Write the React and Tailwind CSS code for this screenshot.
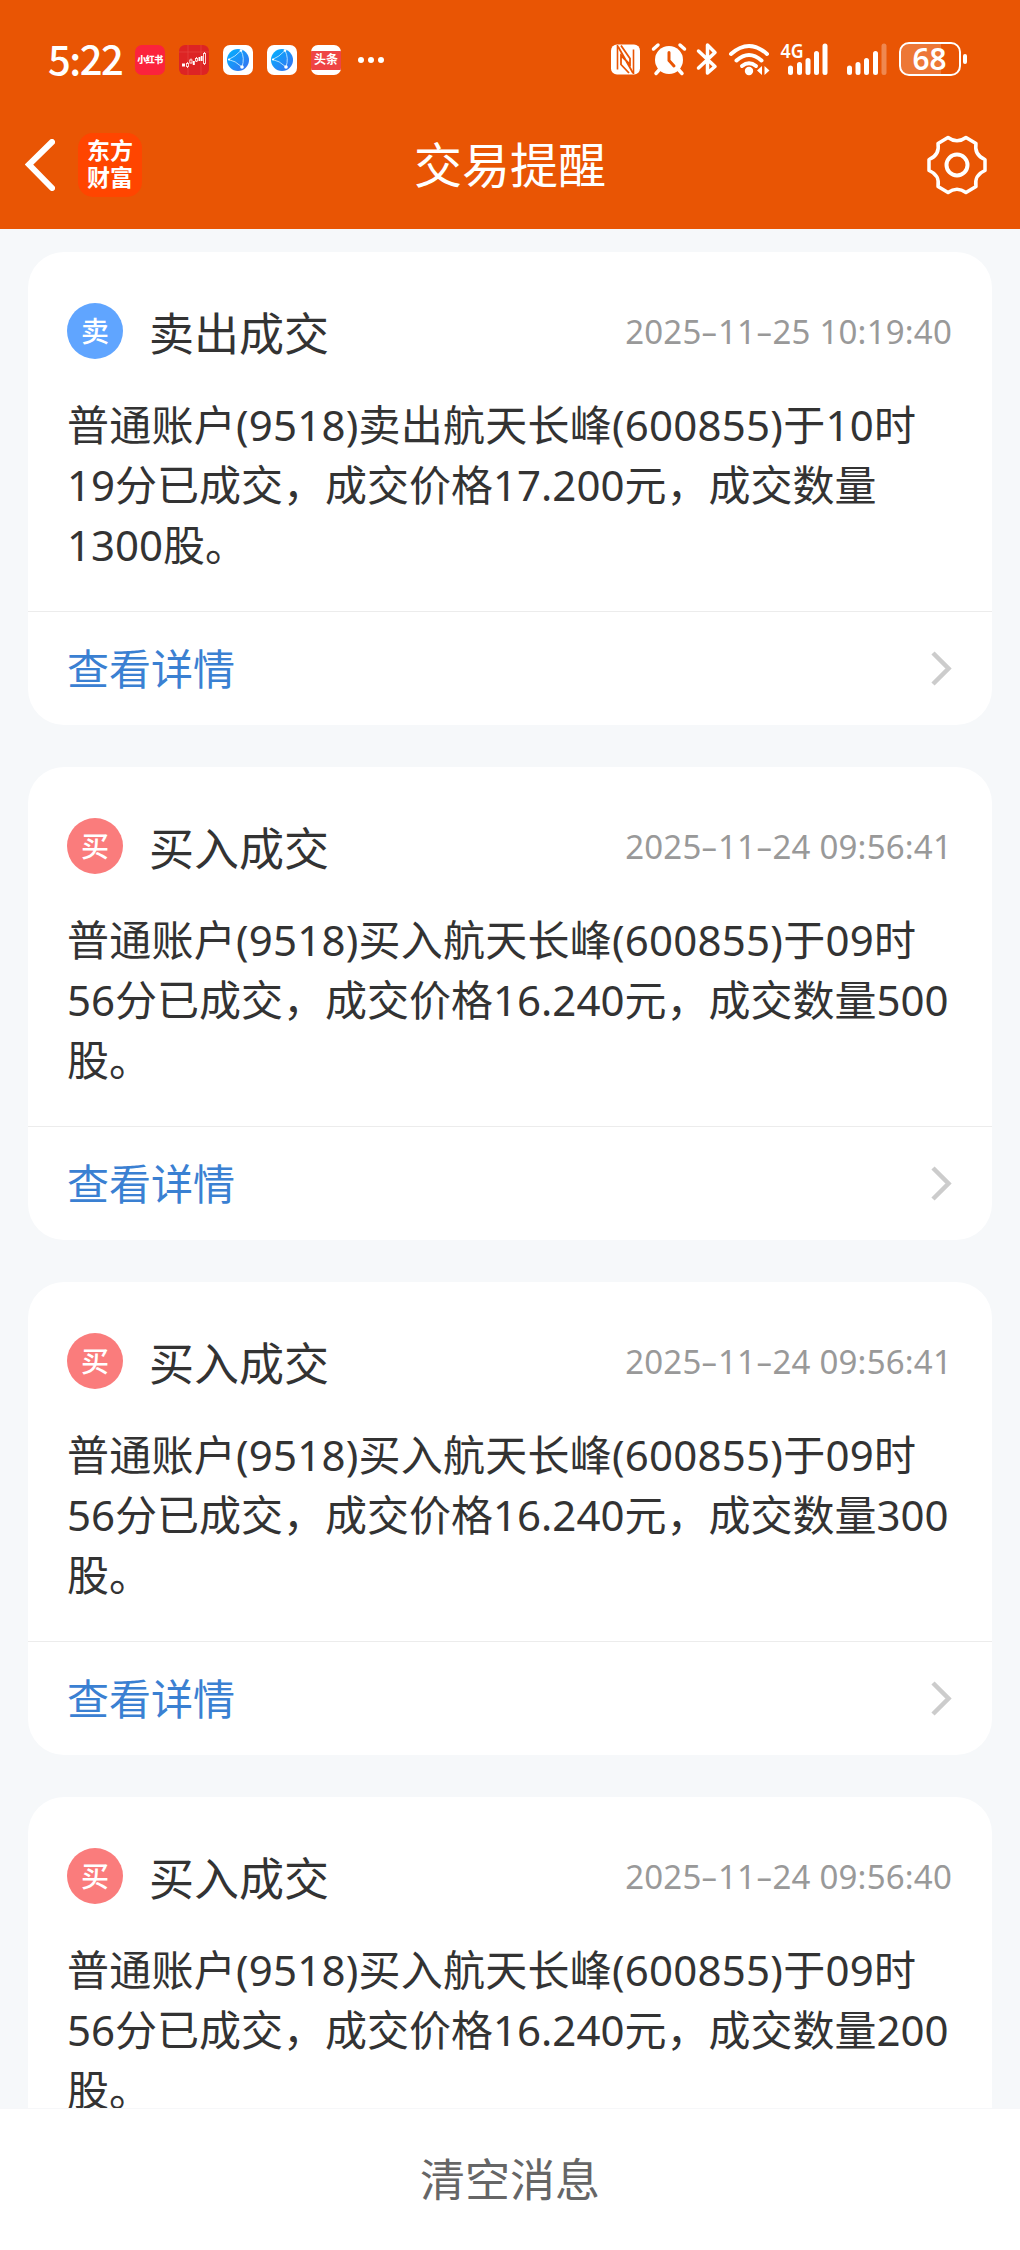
const messages = [
 {
  id: 1,
  tipe: "JUAL",
  judul: "卖出成交",
  waktu: "2025-11-25 10:19:40",
  isi: [
   "普通账户(9518)卖出航天长峰(600855)于10时",
   "19分已成交，成交价格17.200元，成交数量",
   "1300股。",
  ],
 },
 {
  id: 2,
  tipe: "BELI",
  judul: "买入成交",
  waktu: "2025-11-24 09:56:41",
  isi: [
   "普通账户(9518)买入航天长峰(600855)于09时",
   "56分已成交，成交价格16.240元，成交数量500",
   "股。",
  ],
 },
 {
  id: 3,
  tipe: "BELI",
  judul: "买入成交",
  waktu: "2025-11-24 09:56:41",
  isi: [
   "普通账户(9518)买入航天长峰(600855)于09时",
   "56分已成交，成交价格16.240元，成交数量300",
   "股。",
  ],
 },
 {
  id: 4,
  tipe: "BELI",
  judul: "买入成交",
  waktu: "2025-11-24 09:56:40",
  isi: [
   "普通账户(9518)买入航天长峰(600855)于09时",
   "56分已成交，成交价格16.240元，成交数量200",
   "股。",
  ],
 },
];

function GlobeIcon() {
 return (
  <svg viewBox="0 0 30 30" className="w-[30px] h-[30px]">
   <defs>
    <linearGradient id="globe" x1="0" y1="0" x2="1" y2="1">
     <stop offset="0" stopColor="#00b4ff" />
     <stop offset="1" stopColor="#3a6df0" />
    </linearGradient>
   </defs>
   <rect width="30" height="30" rx="7" fill="#fff" />
   <circle cx="15" cy="15" r="11" fill="url(#globe)" />
   <path
    d="M18 5.500Q12 12 5.500 14.500Q12 15.500 19 22M18 5.500Q22 13 19 22"
    fill="none"
    stroke="#bfe6ff"
    strokeWidth="0.900"
   />
   <circle cx="18" cy="5.500" r="1.300" fill="#fff" />
   <circle cx="6" cy="14.500" r="1.100" fill="#fff" />
   <circle cx="19" cy="22" r="1.800" fill="#fff" />
  </svg>
 );
}

function StockIcon() {
 return (
  <svg viewBox="0 0 30 30" className="w-[30px] h-[30px]">
   <rect width="30" height="30" rx="6" fill="#dd2424" />
   <path d="M0 7H30M9 0V30M22 0V30" stroke="#e5423c" strokeWidth="0.800" />
   <g fill="#dd2424" stroke="#ffe9e6" strokeWidth="0.900">
    <path d="M8.500 17v6M12 13.500v5M17.500 12v5M25.500 7v13" />
    <rect x="7.500" y="18.500" width="2" height="3" />
    <rect x="10.800" y="15" width="2.200" height="3" />
    <rect x="16.500" y="13.500" width="2" height="2.500" />
    <rect x="24.500" y="8.500" width="2" height="10" />
   </g>
   <path
    d="M3 18.500h3v3H3zM13.800 16h2v4h-2zM19.500 12h1.800v4h-1.800zM21.800 11h1.800v5h-1.800z"
    fill="#fff"
   />
  </svg>
 );
}

function StatusBar() {
 return (
  <div className="flex justify-between items-center h-[120px] pl-[48px] pr-[52px]">
   <div className="flex items-center">
    <span className="w-[87px] pb-[5px] text-[40px] leading-[60px] font-medium tracking-[-1.5px] font-['Noto_Sans_CJK_SC']">
     5:22
    </span>
    <div className="flex items-center gap-[14px]">
     <span className="w-[30px] h-[30px] rounded-[7px] bg-[#fb233d] flex items-center justify-center text-[9px] font-black whitespace-nowrap tracking-[-0.5px]">
      小红书
     </span>
     <StockIcon />
     <GlobeIcon />
     <GlobeIcon />
     <span className="w-[30px] h-[30px] rounded-[7px] bg-white flex flex-col justify-center overflow-hidden">
      <span className="h-[19px] bg-[#ee4445] text-[12px] leading-[18px] font-bold text-center whitespace-nowrap">
       头条
      </span>
     </span>
    </div>
    <div className="flex gap-[4.500px] ml-[17px]">
     <span className="w-[5.500px] h-[5.500px] rounded-full bg-white" />
     <span className="w-[5.500px] h-[5.500px] rounded-full bg-white" />
     <span className="w-[5.500px] h-[5.500px] rounded-full bg-white" />
    </div>
   </div>

   {/* NFC, alarm, bluetooth, wifi, sinyal, baterai */}
   <svg viewBox="0 0 360 40" className="w-[360px] h-[40px] overflow-visible">
    <g transform="translate(-8 0)">
     <rect x="11" y="4.500" width="29" height="30" rx="6" fill="#fff" />
     <path d="M17.500 5v24.500M33.500 9.500v24.500" stroke="#e95504" strokeWidth="1.600" />
     <path
      d="M18 6.500L33 33M21 5.500l9 13v6l-9-9v9l8 8.500"
      stroke="#e95504"
      strokeWidth="1.800"
      fill="none"
     />

     <circle cx="69" cy="20" r="14" fill="#fff" />
     <path
      d="M53.500 9l4.500-4M84.500 9L80 5M60 29l-4 4.500M78 29l4 4.500"
      stroke="#fff"
      strokeWidth="3.500"
      strokeLinecap="round"
     />
     <path
      d="M69 12.500V20.500l5 5.500"
      stroke="#e95504"
      strokeWidth="3"
      strokeLinecap="round"
      fill="none"
     />

     <path
      d="M98.500 11L115 26.500L107.500 33V5L115 12.500L98.500 28"
      stroke="#fff"
      strokeWidth="3.500"
      strokeLinecap="round"
      strokeLinejoin="round"
      fill="none"
     />

     <g stroke="#fff" strokeWidth="4" strokeLinecap="round" fill="none">
      <path d="M131 14Q149 -2 167 14" />
      <path d="M136.500 20.500Q149 9.500 161.500 20.500" />
      <path d="M142 26Q149 20.500 156 26" />
     </g>
     <circle cx="149" cy="31" r="4.200" fill="#fff" />
     <path d="M162 26v9l-5-4.500zM164.500 26v9l5-4.500z" fill="#fff" />

     <text
      x="180.500"
      y="18"
      fill="#fff"
      fontSize="19"
      fontWeight="600"
      fontFamily="Noto Sans"
      textLength="23"
      lengthAdjust="spacingAndGlyphs"
     >
      4G
     </text>
     <g stroke="#fff" strokeWidth="5" strokeLinecap="round">
      <path d="M190.500 28v4.500M199.500 24.500v8M208 20.500v12M216.500 13.500v19M225 6v26.500" />
      <path d="M249.500 28v4.500M258 24.500v8M266.500 20.500v12M275.500 13.500v19" />
      <path d="M284 6v26.500" opacity="0.3" />
     </g>

     <path d="M308 3h33v32h-33a7 7 0 0 1-7-7V10a7 7 0 0 1 7-7z" fill="#fff" opacity="0.2" />
     <rect x="300" y="3" width="60" height="32" rx="9" fill="none" stroke="#fff" strokeWidth="2" />
     <rect x="363" y="14" width="4" height="10" rx="2" fill="#fff" />
     <text
      x="329.500"
      y="30"
      fill="#fff"
      fontSize="30"
      fontWeight="600"
      fontFamily="Noto Sans"
      textAnchor="middle"
      textLength="34"
      lengthAdjust="spacingAndGlyphs"
     >
      68
     </text>
    </g>
   </svg>
  </div>
 );
}

function Header() {
 return (
  <header className="h-[229px] flex-shrink-0 bg-[#e95504] text-white">
   <StatusBar />
   <div className="grid grid-cols-3 items-center h-[90px] px-[25px]">
    <div className="flex items-center gap-[23px]">
     <svg viewBox="0 0 30 52" className="w-[30px] h-[52px]">
      <path
       d="M27 3L4 25.500L27 49"
       fill="none"
       stroke="#fff"
       strokeWidth="6"
       strokeLinecap="round"
      />
     </svg>
     <div className="w-[64px] h-[64px] rounded-[15px] bg-[#ff4500] text-[23px] leading-[27px] font-bold text-center pt-[4px]">
      <p>东方</p>
      <p>财富</p>
     </div>
    </div>
    <h1 className="text-[48px] leading-[60px] text-center">交易提醒</h1>
    <svg viewBox="0 0 60 60" className="w-[60px] h-[60px] mr-[8px] justify-self-end">
     <path
      d="M21 2.500Q30 9 39 2.500L49 8.500Q47 20 58 24.500V35.500Q47 40 49 51.500L39 57.500Q30 51 21 57.500L11 51.500Q13 40 2 35.500V24.500Q13 20 11 8.500Z"
      fill="none"
      stroke="#fff"
      strokeWidth="3.500"
      strokeLinejoin="round"
     />
     <circle cx="30" cy="30" r="10.500" fill="none" stroke="#fff" strokeWidth="4" />
    </svg>
   </div>
  </header>
 );
}

function Waktu({ value }) {
 const bagian = value.split("-");

 return (
  <span className="ml-auto mt-[2px] text-[33px] leading-[56px] tracking-[0.2px] text-[#999] whitespace-nowrap">
   {bagian.map((b, i) => (
    <span key={i}>
     {i > 0 && <span className="inline-block mx-[2.800px] scale-x-160">-</span>}
     {b}
    </span>
   ))}
  </span>
 );
}

function MessageCard({ msg }) {
 return (
  <div className="h-[473px] flex-shrink-0 bg-white rounded-[36px] flex flex-col">
   <div className="h-[359px] pl-[39px] pr-[40px] pt-[51px]">
    <div className="flex items-center h-[56px]">
     <span
      className={`w-[56px] h-[56px] rounded-full flex items-center justify-center text-[28px] leading-none font-medium text-white ${
       msg.tipe === "JUAL" ? "bg-[#60a5ff]" : "bg-[#fa7c7c]"
      }`}
     >
      {msg.tipe === "JUAL" ? "卖" : "买"}
     </span>
     <h2 className="ml-[26px] mt-[6px] text-[45px] leading-[56px] text-[#333]">
      {msg.judul}
     </h2>
     <Waktu value={msg.waktu} />
    </div>
    <div className="mt-[36px] text-[42px] leading-[60px] text-[#333] whitespace-nowrap">
     {msg.isi.map((baris) => (
      <p key={baris} className="first:tracking-[0.23px]">
       {baris}
      </p>
     ))}
    </div>
   </div>
   <button className="flex items-center justify-between flex-1 border-t border-[#ececec] pl-[39px] pr-[40px] text-[42px] text-[#3a80d2]">
    <span>查看详情</span>
    <svg viewBox="0 0 22 36" className="w-[22px] h-[36px]">
     <path d="M3 2L18.500 17.500L3 33" fill="none" stroke="#ccc" strokeWidth="4.500" />
    </svg>
   </button>
  </div>
 );
}

export default function App() {
 return (
  <div className="w-[1020px] h-[2250px] flex flex-col overflow-hidden bg-[#f6f8fa] font-['Noto_Sans','Noto_Sans_CJK_SC',sans-serif]">
   <Header />
   <main className="flex-1 min-h-0 overflow-hidden flex flex-col gap-[42px] px-[28px] pt-[23px]">
    {messages.map((msg) => (
     <MessageCard key={msg.id} msg={msg} />
    ))}
   </main>
   <button className="h-[142px] flex-shrink-0 bg-white border-t border-[#f6f7f9] text-[45px] text-[#666]">
    清空消息
   </button>
  </div>
 );
}
